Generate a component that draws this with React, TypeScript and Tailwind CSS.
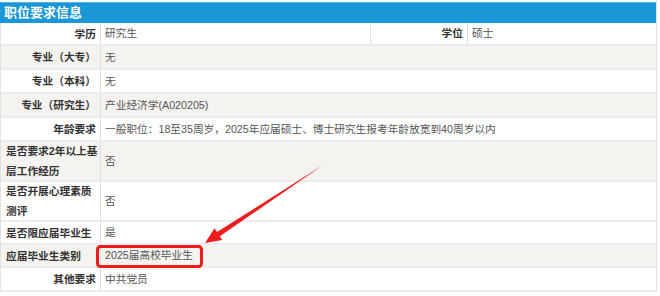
import React from "react";

const font = { fontFamily: '"Liberation Sans", Arial, "Noto Sans CJK SC", sans-serif' };

type Row = {
  label: React.ReactNode;
  value: React.ReactNode;
  h: string;
  bg: string;
  align: "right" | "left";
};

function LabelCell({ children, align, bg }: { children: React.ReactNode; align: "right" | "left"; bg: string }) {
  return (
    <div
      className={`w-[100px] shrink-0 flex items-center border-r border-[#dedede] font-bold text-[#333] text-[10.7px] leading-[20px] ${bg} ${
        align === "right" ? "justify-end pr-[4px] text-right" : "justify-start pl-[5px] text-left"
      }`}
    >
      <div>{children}</div>
    </div>
  );
}

export default function App() {
  const rows: Row[] = [
    { label: "专业（大专）", value: "无", h: "h-[24px]", bg: "bg-[#f4f3f0]", align: "right" },
    { label: "专业（本科）", value: "无", h: "h-[24px]", bg: "bg-white", align: "right" },
    { label: "专业（研究生）", value: "产业经济学(A020205)", h: "h-[24px]", bg: "bg-[#f4f3f0]", align: "right" },
    {
      label: "年龄要求",
      value: "一般职位：18至35周岁，2025年应届硕士、博士研究生报考年龄放宽到40周岁以内",
      h: "h-[24px]",
      bg: "bg-white",
      align: "right",
    },
    {
      label: (
        <>
          <div className="whitespace-nowrap">是否要求2年以上基</div>
          <div className="whitespace-nowrap">层工作经历</div>
        </>
      ),
      value: "否",
      h: "h-[40px]",
      bg: "bg-[#f4f3f0]",
      align: "left",
    },
    {
      label: (
        <>
          <div className="whitespace-nowrap">是否开展心理素质</div>
          <div className="whitespace-nowrap">测评</div>
        </>
      ),
      value: "否",
      h: "h-[40px]",
      bg: "bg-white",
      align: "left",
    },
    { label: "是否限应届毕业生", value: "是", h: "h-[23px]", bg: "bg-white", align: "left" },
    { label: "应届毕业生类别", value: "2025届高校毕业生", h: "h-[23px]", bg: "bg-[#f4f3f0]", align: "left" },
    { label: "其他要求", value: "中共党员", h: "h-[24px]", bg: "bg-white", align: "right" },
  ];

  return (
    <div className="relative w-[660px] h-[296px] bg-white overflow-hidden" style={font}>
      <div className="w-[657px] pt-[2px] border-r border-[#e2e2e2]">
        <div className="h-[21px] bg-[#1a97d6] border-t border-[#4fb3e6] flex items-center pl-[4px] text-white font-bold text-[13px]">
          职位要求信息
        </div>
        <div className="border-l border-[#e2e2e2]">
          <div className="flex h-[23px] border-b-2 border-[#ececec] bg-white">
            <LabelCell align="right" bg="bg-white">
              学历
            </LabelCell>
            <div className="w-[270px] shrink-0 flex items-center pl-[4px] border-r border-[#dedede] text-[10.7px] text-[#555]">
              研究生
            </div>
            <div className="w-[97px] shrink-0 flex items-center justify-end pr-[4px] border-r border-[#dedede] font-bold text-[10.7px] text-[#333]">
              学位
            </div>
            <div className="flex-1 flex items-center pl-[4px] text-[10.7px] text-[#555]">硕士</div>
          </div>
          {rows.map((r, i) => (
            <div key={i} className={`flex ${r.h} border-b-2 border-[#ececec] ${r.bg}`}>
              <LabelCell align={r.align} bg={r.bg}>
                {r.label}
              </LabelCell>
              <div className="flex-1 flex items-center pl-[4px] text-[10.7px] text-[#555] whitespace-nowrap">
                {r.value}
              </div>
            </div>
          ))}
        </div>
      </div>
      <svg className="absolute left-0 top-0 pointer-events-none" width="660" height="296" viewBox="0 0 660 296">
        <rect x="97.5" y="246.5" width="104" height="20" rx="3" fill="none" stroke="#ee1c1c" strokeWidth="3" />
        <polygon
          points="205,243 214.5,228.3 217,232.1 323,165 219.8,236.3 222.3,240.1"
          fill="#ee1c1c"
        />
      </svg>
    </div>
  );
}
